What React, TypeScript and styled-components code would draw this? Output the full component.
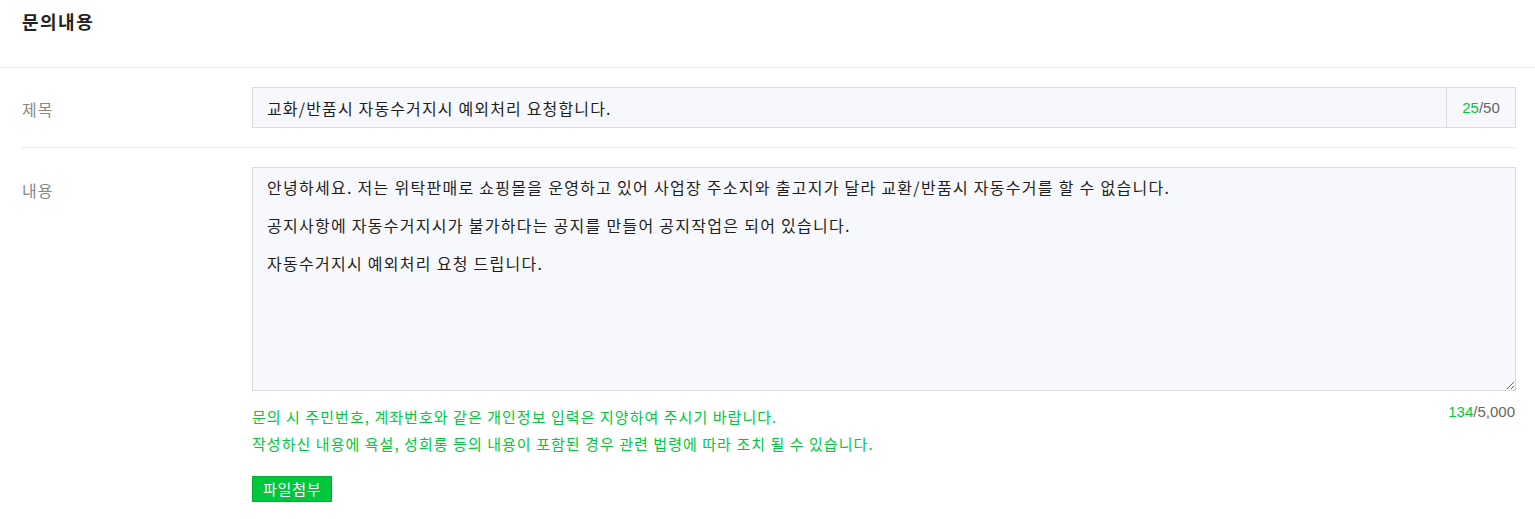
import React from "react";
import styled, { createGlobalStyle } from "styled-components";

const GlobalStyle = createGlobalStyle`
  html, body {
    margin: 0;
    padding: 0;
    background: #ffffff;
  }
  body {
    font-family: "Noto Sans CJK KR", "Liberation Sans", sans-serif;
    color: #222222;
  }
  * { box-sizing: border-box; }
`;

const Page = styled.div`
  width: 100%;
`;

const Header = styled.header`
  height: 68px;
  padding: 9px 22px 0;
  border-bottom: 1px solid #e5e5e5;
`;

const Title = styled.h2`
  margin: 0;
  font-size: 18px;
  line-height: 24px;
  font-weight: 700;
  letter-spacing: 1.5px;
  color: #222222;
`;

const Form = styled.div`
  padding: 0 19px 0 22px;
`;

const Row = styled.div<{ $last?: boolean }>`
  display: grid;
  grid-template-columns: 230px 1fr;
  padding: 19px 0 ${(p) => (p.$last ? "0" : "19px")};
  border-bottom: ${(p) => (p.$last ? "none" : "1px solid #ebebeb")};
`;

const Label = styled.div<{ $top: number }>`
  padding-top: ${(p) => p.$top}px;
  font-size: 16px;
  line-height: 20px;
  letter-spacing: 1px;
  color: #888888;
`;

const Field = styled.div`
  display: flex;
  height: 41px;
  border: 1px solid #dcdcdc;
  background: #f7f8fb;
`;

const TitleInput = styled.input`
  flex: 1;
  min-width: 0;
  height: 100%;
  padding: 0 14px;
  border: none;
  outline: none;
  background: transparent;
  font-family: inherit;
  font-size: 16px;
  letter-spacing: 1.15px;
  color: #1e1e1e;
`;

const Counter = styled.div`
  display: flex;
  align-items: center;
  justify-content: center;
  width: 69px;
  border-left: 1px solid #dcdcdc;
  font-family: "Liberation Sans", Arial, sans-serif;
  font-size: 15px;
  color: #666666;
`;

const Current = styled.span`
  color: #00c73c;
`;

const Body = styled.textarea`
  display: block;
  width: 100%;
  height: 224px;
  padding: 10px 14px;
  border: 1px solid #dcdcdc;
  background: #f7f8fb;
  outline: none;
  resize: vertical;
  overflow: hidden;
  font-family: inherit;
  font-size: 16px;
  line-height: 19px;
  letter-spacing: 1.28px;
  color: #1e1e1e;
`;

const HelpRow = styled.div`
  display: flex;
  justify-content: space-between;
  align-items: flex-start;
  margin-top: 12px;
`;

const HelpText = styled.p`
  margin: 0;
  font-size: 15px;
  line-height: 27px;
  letter-spacing: 1.05px;
  color: #00c73c;
`;

const BodyCounter = styled.div`
  font-family: "Liberation Sans", Arial, sans-serif;
  font-size: 15px;
  line-height: 18px;
  color: #666666;
  padding-right: 1px;
`;

const AttachButton = styled.button`
  display: block;
  margin-top: 19px;
  height: 26px;
  padding: 0 10px;
  border: 1px solid #00b035;
  background: #00c73c;
  color: #ffffff;
  font-family: inherit;
  font-size: 15px;
  letter-spacing: 0.8px;
  line-height: 24px;
  cursor: pointer;
`;

const bodyText =
  "안녕하세요. 저는 위탁판매로 쇼핑몰을 운영하고 있어 사업장 주소지와 출고지가 달라 교환/반품시 자동수거를 할 수 없습니다.\n\n공지사항에 자동수거지시가 불가하다는 공지를 만들어 공지작업은 되어 있습니다.\n\n자동수거지시 예외처리 요청 드립니다.";

export default function App() {
  return (
    <Page>
      <GlobalStyle />
      <Header>
        <Title>문의내용</Title>
      </Header>
      <Form>
        <Row>
          <Label $top={12}>제목</Label>
          <Field>
            <TitleInput defaultValue="교화/반품시 자동수거지시 예외처리 요청합니다." />
            <Counter>
              <Current>25</Current>/50
            </Counter>
          </Field>
        </Row>
        <Row $last>
          <Label $top={13}>내용</Label>
          <div>
            <Body defaultValue={bodyText} />
            <HelpRow>
              <div>
                <HelpText>문의 시 주민번호, 계좌번호와 같은 개인정보 입력은 지양하여 주시기 바랍니다.</HelpText>
                <HelpText>작성하신 내용에 욕설, 성희롱 등의 내용이 포함된 경우 관련 법령에 따라 조치 될 수 있습니다.</HelpText>
              </div>
              <BodyCounter>
                <Current>134</Current>/5,000
              </BodyCounter>
            </HelpRow>
            <AttachButton type="button">파일첨부</AttachButton>
          </div>
        </Row>
      </Form>
    </Page>
  );
}
